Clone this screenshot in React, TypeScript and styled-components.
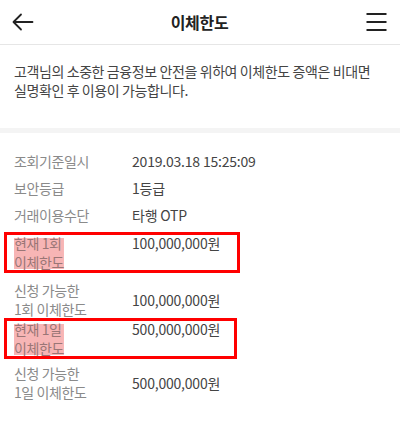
import React from "react";
import styled, { createGlobalStyle } from "styled-components";

const Global = createGlobalStyle`
  html, body { margin: 0; padding: 0; background: #fff; }
  body { font-family: "Noto Sans CJK KR", "Noto Sans", sans-serif; }
`;

const Page = styled.div`
  width: 400px;
  height: 423px;
  overflow: hidden;
  background: #fff;
`;

const Header = styled.header`
  height: 44px;
  border-bottom: 1px solid #e6e6e6;
  display: flex;
  align-items: center;
  justify-content: space-between;
  padding: 0 13px 0 12px;
  box-sizing: content-box;
`;

const IconButton = styled.div`
  width: 22px;
  height: 22px;
  display: flex;
  align-items: center;
  justify-content: center;
`;

const Title = styled.h1`
  margin: 0;
  font-size: 16px;
  font-weight: 700;
  color: #222;
  letter-spacing: -0.3px;
`;

const Intro = styled.p`
  margin: 0;
  padding: 17px 14px 28px;
  font-size: 14px;
  line-height: 19px;
  color: #444;
  letter-spacing: -0.4px;
`;

const Band = styled.div`
  height: 5px;
  background: #f4f4f4;
`;

const List = styled.div`
  padding-top: 19px;
  display: flex;
  flex-direction: column;
`;

const Row = styled.div<{ $gap: number; $align: "start" | "center" }>`
  position: relative;
  margin-top: ${(p) => p.$gap}px;
  display: flex;
  align-items: ${(p) => (p.$align === "start" ? "flex-start" : "center")};
  padding: 0 14px;
  font-size: 14px;
  line-height: 19px;
`;

const Label = styled.div`
  width: 118px;
  flex: none;
  color: #8a8a8a;
  letter-spacing: -0.4px;
`;

const Mark = styled.span`
  display: inline-block;
  color: #9a7676;
  background: linear-gradient(#f7b5b5, #f7b5b5) no-repeat center;
  background-size: 100% calc(100% - 7px);
`;

const Value = styled.div`
  color: #444;
  letter-spacing: -0.2px;
`;

const Annot = styled.div<{ $width: number }>`
  position: absolute;
  left: 4px;
  top: -2px;
  bottom: -1px;
  width: ${(p) => p.$width}px;
  border: 3px solid #ff0000;
  box-sizing: border-box;
  pointer-events: none;
`;

type Item = {
  label: string[];
  value: string;
  gap: number;
  align: "start" | "center";
  mark?: boolean;
  box?: number;
};

const items: Item[] = [
  { label: ["조회기준일시"], value: "2019.03.18 15:25:09", gap: 0, align: "center" },
  { label: ["보안등급"], value: "1등급", gap: 8, align: "center" },
  { label: ["거래이용수단"], value: "타행 OTP", gap: 8, align: "center" },
  { label: ["현재 1회", "이체한도"], value: "100,000,000원", gap: 9, align: "start", mark: true, box: 236 },
  { label: ["신청 가능한", "1회 이체한도"], value: "100,000,000원", gap: 9, align: "center" },
  { label: ["현재 1일", "이체한도"], value: "500,000,000원", gap: 1, align: "start", mark: true, box: 233 },
  { label: ["신청 가능한", "1일 이체한도"], value: "500,000,000원", gap: 6, align: "center" },
];

const BackIcon = () => (
  <svg width="22" height="18" viewBox="0 0 22 18" fill="none" stroke="#222" strokeWidth="1.8" strokeLinecap="round" strokeLinejoin="round">
    <path d="M20.5 9H2M9 1.5L1.5 9L9 16.5" />
  </svg>
);

const MenuIcon = () => (
  <svg width="21" height="18" viewBox="0 0 21 18" fill="none" stroke="#222" strokeWidth="2">
    <path d="M0.5 1H20.5M0.5 9H20.5M0.5 17H20.5" />
  </svg>
);

export default function App() {
  return (
    <Page>
      <Global />
      <Header>
        <IconButton>
          <BackIcon />
        </IconButton>
        <Title>이체한도</Title>
        <IconButton>
          <MenuIcon />
        </IconButton>
      </Header>
      <Intro>
        고객님의 소중한 금융정보 안전을 위하여 이체한도 증액은 비대면
        <br />
        실명확인 후 이용이 가능합니다.
      </Intro>
      <Band />
      <List>
        {items.map((it, i) => {
          const lines = it.label.map((l, j) => (
            <React.Fragment key={j}>
              {j > 0 && <br />}
              {l}
            </React.Fragment>
          ));
          return (
            <Row key={i} $gap={it.gap} $align={it.align}>
              <Label>{it.mark ? <Mark>{lines}</Mark> : lines}</Label>
              <Value>{it.value}</Value>
              {it.box && <Annot $width={it.box} />}
            </Row>
          );
        })}
      </List>
    </Page>
  );
}
